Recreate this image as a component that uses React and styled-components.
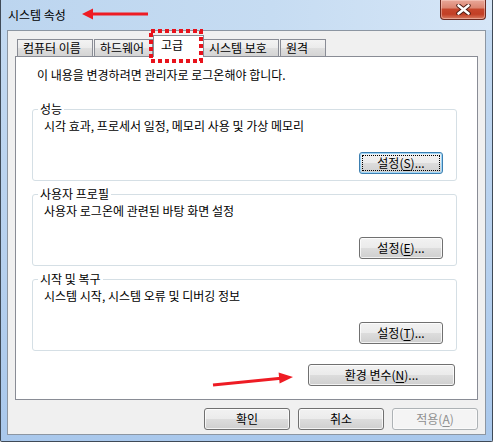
import styled, { createGlobalStyle } from "styled-components";

const GlobalStyle = createGlobalStyle`
  html, body {
    margin: 0;
    padding: 0;
    background: #ffffff;
  }
  body {
    font-family: "Noto Sans CJK KR", "Noto Sans", sans-serif;
    font-size: 12px;
    color: #000;
  }
  * {
    box-sizing: border-box;
  }
`;

const Window = styled.div`
  position: relative;
  width: 493px;
  height: 442px;
  display: flex;
  flex-direction: column;
  border: 1px solid #3f4a57;
  border-top: none;
  border-radius: 0 0 2px 2px;
  background: linear-gradient(#c4daf1, #b6d0ee 60%, #a9c8ec);
`;

const TitleBar = styled.div`
  height: 30px;
  flex: none;
  display: flex;
  align-items: flex-start;
  justify-content: space-between;
  padding-left: 7px;
  background: linear-gradient(to right, #bcd5ef 0%, #c6dcf2 55%, #d6e6f7 100%);
`;

const Title = styled.span`
  margin-top: 7px;
  line-height: 16px;
  font-size: 12px;
`;

const CloseButton = styled.div`
  width: 46px;
  height: 20px;
  margin-right: 6px;
  display: flex;
  align-items: center;
  justify-content: center;
  border: 1px solid #6b2a21;
  border-top: none;
  border-radius: 0 0 4px 4px;
  background: linear-gradient(
    #e9a899 0%,
    #dc8672 40%,
    #c6462c 50%,
    #c23f25 75%,
    #d87c62 100%
  );
  box-shadow: inset 0 0 0 1px rgba(255, 220, 210, 0.45);
`;

const Client = styled.div`
  flex: 1;
  display: flex;
  flex-direction: column;
  margin: 0 6px 6px;
  padding: 4px 7px 4px;
  border: 1px solid #8c96a2;
  background: #f0f0f0;
`;

const TabStrip = styled.div`
  height: 21px;
  flex: none;
  display: flex;
  align-items: flex-end;
  padding-left: 2px;
`;

const Tab = styled.div`
  position: relative;
  flex: none;
  width: ${(p) => p.$width}px;
  padding-left: ${(p) => (p.$active ? 7 : 5)}px;
  margin: ${(p) => (p.$active ? "0 -1px -1px" : "0 1px 0 0")};
  height: ${(p) => (p.$active ? "22px" : "17px")};
  line-height: ${(p) => (p.$active ? "17px" : "15px")};
  white-space: nowrap;
  border: 1px solid #898c95;
  border-bottom: none;
  background: ${(p) =>
    p.$active
      ? "#ffffff"
      : "linear-gradient(#f3f3f3 0%, #ebebeb 50%, #dfdfdf 50%, #d4d4d4 100%)"};
  z-index: ${(p) => (p.$active ? 2 : 1)};
`;

const Panel = styled.div`
  flex: 1;
  display: flex;
  flex-direction: column;
  padding-top: 10px;
  border: 1px solid #898c95;
  background: #ffffff;
`;

const Notice = styled.p`
  margin: 0 0 19px 21px;
  line-height: 16px;
`;

const Group = styled.fieldset`
  margin: 0 20px 6px 16px;
  padding: 0;
  min-width: 0;
  border: 1px solid #d5dfe5;
  border-radius: 3px;
`;

const Legend = styled.legend`
  margin-left: 5px;
  padding: 0 2px;
  line-height: 14px;
  font-size: 12px;
`;

const GroupBody = styled.div`
  padding: 2px 13px 6px 11px;
`;

const Description = styled.div`
  line-height: 16px;
`;

const ButtonRow = styled.div`
  display: flex;
  justify-content: flex-end;
  gap: 8px;
  margin-top: ${(p) => p.$top || 0}px;
  margin-right: ${(p) => p.$right || 0}px;
`;

const Button = styled.button`
  position: relative;
  width: ${(p) => p.$width}px;
  height: 22px;
  padding: 0;
  font-family: inherit;
  font-size: 12px;
  line-height: 18px;
  color: ${(p) => (p.disabled ? "#8f8f8f" : "#000")};
  border: 1px solid
    ${(p) => (p.disabled ? "#adb2b5" : p.$focused ? "#3c7fb1" : "#707070")};
  border-radius: 3px;
  background: ${(p) =>
    p.disabled
      ? "#f4f4f4"
      : "linear-gradient(#f2f2f2 0%, #ebebeb 50%, #dddddd 50%, #cfcfcf 100%)"};
  box-shadow: inset 0 0 0 1px
    ${(p) =>
      p.disabled
        ? "#fafafa"
        : p.$focused
        ? "#9fd6f8"
        : "rgba(255, 255, 255, 0.75)"};

  &::after {
    content: "";
    display: ${(p) => (p.$focused ? "block" : "none")};
    position: absolute;
    inset: 2px;
    border: 1px dotted #000;
  }

  u {
    text-decoration-thickness: 1px;
    text-underline-offset: 2px;
  }
`;

const Annotations = styled.svg`
  position: absolute;
  left: -1px;
  top: 0;
  width: 493px;
  height: 442px;
  pointer-events: none;
  z-index: 5;
`;

const groups = [
  {
    title: "성능",
    text: "시각 효과, 프로세서 일정, 메모리 사용 및 가상 메모리",
    key: "S",
    focused: true,
  },
  {
    title: "사용자 프로필",
    text: "사용자 로그온에 관련된 바탕 화면 설정",
    key: "E",
  },
  {
    title: "시작 및 복구",
    text: "시스템 시작, 시스템 오류 및 디버깅 정보",
    key: "T",
  },
];

const tabs = [
  { label: "컴퓨터 이름", width: 76 },
  { label: "하드웨어", width: 59 },
  { label: "고급", width: 51, active: true },
  { label: "시스템 보호", width: 76 },
  { label: "원격", width: 46 },
];

const CloseGlyph = () => (
  <svg width="15" height="11" viewBox="0 0 15 11">
    <path
      d="M2.5 1.5 L12.5 9.5 M12.5 1.5 L2.5 9.5"
      stroke="#4a1a12"
      strokeWidth="4.4"
      strokeLinecap="round"
    />
    <path
      d="M2.5 1.5 L12.5 9.5 M12.5 1.5 L2.5 9.5"
      stroke="#ffffff"
      strokeWidth="2.6"
      strokeLinecap="round"
    />
  </svg>
);

export default function App() {
  return (
    <>
      <GlobalStyle />
      <Window>
        <TitleBar>
          <Title>시스템 속성</Title>
          <CloseButton>
            <CloseGlyph />
          </CloseButton>
        </TitleBar>
        <Client>
          <TabStrip>
            {tabs.map((t) => (
              <Tab key={t.label} $width={t.width} $active={t.active}>
                {t.label}
              </Tab>
            ))}
          </TabStrip>
          <Panel>
            <Notice>이 내용을 변경하려면 관리자로 로그온해야 합니다.</Notice>
            {groups.map((g) => (
              <Group key={g.title}>
                <Legend>{g.title}</Legend>
                <GroupBody>
                  <Description>{g.text}</Description>
                  <ButtonRow $top={18}>
                    <Button $width={84} $focused={g.focused}>
                      설정(<u>{g.key}</u>)...
                    </Button>
                  </ButtonRow>
                </GroupBody>
              </Group>
            ))}
            <ButtonRow $top={7} $right={22}>
              <Button $width={147}>
                환경 변수(<u>N</u>)...
              </Button>
            </ButtonRow>
          </Panel>
          <ButtonRow $top={8}>
            <Button $width={86}>확인</Button>
            <Button $width={86}>취소</Button>
            <Button $width={86} disabled>
              적용(<u>A</u>)
            </Button>
          </ButtonRow>
        </Client>
        <Annotations viewBox="0 0 493 442">
          <line x1="148" y1="14" x2="90" y2="14" stroke="#ee1c24" strokeWidth="3" />
          <polygon points="82,14 93,8.5 93,19.5" fill="#ee1c24" />
          <line x1="213" y1="385" x2="281" y2="378.2" stroke="#ee1c24" strokeWidth="3" />
          <polygon points="293,377 279.6,383.5 278.6,372.5" fill="#ee1c24" />
          <rect
            x="151"
            y="31"
            width="50"
            height="30"
            fill="none"
            stroke="#e8121b"
            strokeWidth="4"
            strokeDasharray="4 3"
          />
        </Annotations>
      </Window>
    </>
  );
}
